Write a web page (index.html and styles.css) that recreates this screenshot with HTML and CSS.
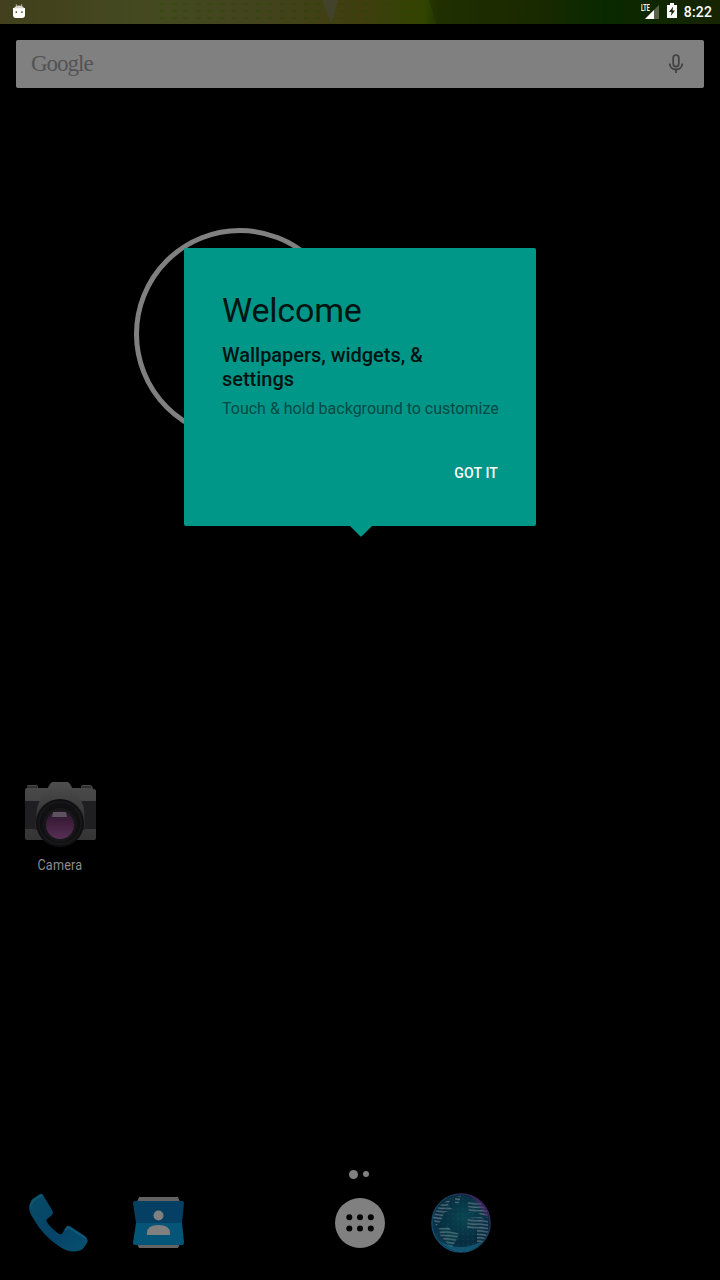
FILE: index.html
```html
<!DOCTYPE html>
<html lang="en">
<head>
<meta charset="utf-8">
<title>Home</title>
<link rel="stylesheet" href="styles.css">
</head>
<body>
<div class="screen">
  <header class="status">
    <svg class="status-pattern" viewBox="0 0 720 24">
      <defs><pattern id="dots" width="12" height="7" patternUnits="userSpaceOnUse"><ellipse cx="6" cy="4" rx="3" ry="1.5" fill="#254500" opacity=".3"/></pattern></defs>
      <path d="M155 0H435V24H155Z" fill="url(#dots)"/>
      <path d="M322 0H338L331 24Z" fill="#45453a" opacity=".6"/>
      <path d="M429 0H515L524 24H436Z" fill="#1e2800" opacity=".4"/>
    </svg>
    <svg class="android" viewBox="0 0 12 16"><path d="M3 1L4 4M9 1L8 4" stroke="#aaa895" stroke-width="1"/><path d="M0 5H12V12Q12 15 9 15H3Q0 15 0 12Z" fill="#fff"/><path d="M1 5.2Q2 2.5 6 2.5T11 5.2Z" fill="#d5d4cb"/><path d="M2.6 8.2H4V10H2.6ZM8.2 8.2H9.6V10H8.2Z" fill="#555438"/></svg>
    <div class="indicators">
      <div class="signal"><span class="lte">LTE</span><svg viewBox="0 0 18 16"><path d="M4 15L18 1V15Z" fill="#596447"/><path d="M4 15L13 6V15Z" fill="#fff"/></svg></div>
      <svg class="battery" viewBox="0 0 10 16"><path d="M3 0H7V2H10V15H0V2H3Z" fill="#fff"/><path d="M6.2 3.5L2 9H4.6L3.8 13L8 7.4H5.5Z" fill="#152400"/></svg>
      <span class="time">8:22</span>
    </div>
  </header>
  <div class="search">
    <span class="brand">Google</span>
    <svg class="mic" viewBox="0 0 16 20"><rect x="5.2" y="1" width="5.6" height="11.6" rx="2.8" fill="none" stroke="#404040" stroke-width="1.7"/><path d="M1.7 9.5C2 17.5 14 17.5 14.3 9.5M8 15.5V19" fill="none" stroke="#404040" stroke-width="1.8"/></svg>
  </div>
  <main class="workspace">
    <div class="clock"></div>
    <div class="app">
      <svg class="camera" viewBox="0 0 72 66">
        <defs>
          <linearGradient id="body" x2="0" y2="1"><stop stop-color="#4a4a4a"/><stop offset="1" stop-color="#343434"/></linearGradient>
          <linearGradient id="hump" x2="0" y2="1"><stop stop-color="#4e4e4e"/><stop offset=".5" stop-color="#3c3c3c"/><stop offset="1" stop-color="#252525"/></linearGradient>
          <linearGradient id="lens" x2="0" y2="1"><stop stop-color="#2a152d"/><stop offset=".5" stop-color="#42203f"/><stop offset="1" stop-color="#563055"/></linearGradient>
        </defs>
        <path d="M3 4Q3 3 5 3H12Q14 3 14 6H57Q57 3 59 3H66Q68 3 69 7Q72 7 72 9V56Q72 58 70 58H3Q1 58 1 56V9Q1 6 3 6Z" fill="url(#body)"/>
        <path d="M1 19H72V47H1Z" fill="#1f1f22"/>
        <path d="M3 4H13V6H3ZM58 4H67V6H58Z" fill="#303030"/>
        <path d="M26 2Q27 0 29 0H43Q45 0 46 2L50 9Q56 14 60 26L61 48H11L13 26Q17 14 22 9Z" fill="url(#hump)"/>
        <circle cx="36" cy="41" r="24" fill="#101012"/>
        <circle cx="36" cy="41" r="21" fill="none" stroke="#19191c" stroke-width="1.5"/>
        <circle cx="36" cy="43" r="17" fill="#171619"/>
        <circle cx="36" cy="43" r="14" fill="url(#lens)"/>
        <path d="M29 30H42L43 35H28Z" fill="#5d535e"/>
      </svg>
      <span class="label">Camera</span>
    </div>
  </main>
  <div class="pages"><i class="page current"></i><i class="page"></i></div>
  <nav class="dock">
    <svg class="phone" viewBox="0 0 60 60">
      <defs><linearGradient id="handset" x2="1" y2="1"><stop stop-color="#084c66"/><stop offset=".55" stop-color="#064368"/><stop offset="1" stop-color="#07506f"/></linearGradient></defs>
      <path d="M1 14L3 8Q4 6 6 5L12 1Q14 0 15 2L24 17Q26 20 24 22L18 27Q20 32 26 37Q31 42 34 41L38 34Q40 32 42 33L57 43Q61 46 59 50L57 53Q54 58 49 58Q42 60 32 54Q14 42 5 25Q1 19 1 14Z" fill="url(#handset)"/>
      <path d="M2 13L6 7L14 2M37 37L40 34L57 45" fill="none" stroke="#145a70" stroke-width="1.5"/>
    </svg>
    <svg class="contacts" viewBox="0 0 52 52">
      <path d="M6 0H45L47 5H4ZM4 47H47L45 51H6Z" fill="#626262"/>
      <path d="M2 4H49Q51 4 51 6L49 26H3L0 6Q0 4 2 4Z" fill="#053f63"/>
      <path d="M3 26H49L51 45Q51 48 49 48H2Q0 48 0 46Z" fill="#055579"/>
      <circle cx="25.5" cy="18.5" r="5" fill="#808080"/>
      <path d="M14 38V36Q14 28 25.5 28T37 36V38Z" fill="#808080"/>
    </svg>
    <span></span>
    <svg class="drawer" viewBox="0 0 50 50"><circle cx="25" cy="25" r="25" fill="#808080"/><g fill="#000"><circle cx="14.3" cy="19.3" r="3"/><circle cx="25" cy="19.3" r="3"/><circle cx="35.8" cy="19.3" r="3"/><circle cx="14.3" cy="30.5" r="3"/><circle cx="25" cy="30.5" r="3"/><circle cx="35.8" cy="30.5" r="3"/></g></svg>
    <svg class="globe" viewBox="0 0 60 62">
      <defs>
        <radialGradient id="sea" cx=".55" cy=".4" r=".6"><stop stop-color="#0b4551"/><stop offset=".75" stop-color="#062c3f"/><stop offset="1" stop-color="#0d3a56"/></radialGradient>
        <linearGradient id="rim" x1="0" y1="1" x2="1" y2="0"><stop stop-color="#125577"/><stop offset=".6" stop-color="#15415b"/><stop offset=".85" stop-color="#43205b"/></linearGradient>
        <pattern id="waves" width="16" height="3.4" patternUnits="userSpaceOnUse" patternTransform="rotate(4)"><path d="M0 1.7Q4 1 8 1.7T16 1.7" fill="none" stroke="#566b79" stroke-width="1.4"/></pattern>
        <pattern id="grid" width="5" height="5" patternUnits="userSpaceOnUse"><circle cx="2" cy="2" r=".8" fill="#1b5865" opacity=".4"/></pattern>
      </defs>
      <circle cx="30" cy="31" r="29.2" fill="url(#sea)" stroke="url(#rim)" stroke-width="1.2"/>
      <circle cx="30" cy="31" r="27" fill="url(#grid)"/>
      <g fill="url(#waves)">
        <path d="M8 14L20 6L17 13L21 17L13 21L10 29L5 34L2 25Z"/>
        <path d="M24 5L30 4L28 11L24 12Z"/>
        <path d="M8 36L17 34L20 38L28 42L25 49L20 57L15 50L9 43Z"/>
        <path d="M37 10L48 9L56 19L57 26L51 24L46 20L38 21Z"/>
        <path d="M37 26L50 25L57 29L57 40L51 51L46 52V38L36 36Z"/>
      </g>
      <path d="M9 36L17 34L20 39L28 42L23 51L20 57L13 46Z" fill="#16806b" opacity=".15"/>
      <path d="M38 3Q54 9 58 26L53 22Q47 10 38 3Z" fill="#5b2075" opacity=".45"/>
      <path d="M9 49Q28 61 52 49Q43 60 30 60Q17 59 9 49Z" fill="#17617d" opacity=".7"/>
    </svg>
  </nav>
  <section class="cling">
    <h1>Welcome</h1>
    <h2>Wallpapers, widgets, &amp; settings</h2>
    <p>Touch &amp; hold background to customize</p>
    <button>GOT IT</button>
    <svg class="pointer" viewBox="0 0 24 12"><path d="M0 0H24L13 11Q12 12 11 11Z" fill="#009688"/></svg>
  </section>
</div>
</body>
</html>
```
FILE: styles.css
```css
* { box-sizing: border-box; }
body { margin: 0; background: #000; font-family: Roboto, sans-serif; }
svg { display: block; }
.screen { position: relative; width: 720px; height: 1280px; display: flex; flex-direction: column; overflow: hidden; background: #000; }
.status { position: relative; height: 24px; flex: none; display: flex; justify-content: space-between; padding: 0 8px 0 13px; background: linear-gradient(90deg, #42401d 0, #444a20 22%, #42441d 35%, #403e10 50%, #324300 59%, #203500 61%, #192900 75%, #082900 84%, #172400 100%); }
.status-pattern { position: absolute; inset: 0; width: 720px; height: 24px; }
.android { position: relative; width: 12px; height: 16px; margin-top: 3px; }
.indicators { position: relative; display: flex; }
.signal { display: flex; margin-right: 8px; }
.signal svg { width: 18px; height: 16px; margin: 4px 0 0 -14px; }
.lte { width: 14px; font-size: 9px; font-weight: 700; line-height: 9px; color: #fff; margin-top: 4px; transform: scaleX(.6); transform-origin: left; }
.battery { width: 10px; height: 16px; margin: 3px 7px 0 0; }
.time { color: #fff; font-size: 14px; font-weight: 500; line-height: 24px; letter-spacing: .15px; }
.search { flex: none; height: 48px; margin: 16px 16px 0; padding: 0 20px 0 15px; border-radius: 2px; background: #808080; display: flex; align-items: center; justify-content: space-between; }
.brand { font: 23px/46px "Liberation Serif", serif; letter-spacing: -1px; color: #535353; }
.mic { width: 16px; height: 20px; }
.workspace { flex: 1; display: flex; flex-direction: column; align-items: flex-start; }
.clock { flex: none; width: 212px; height: 212px; margin: 140px 0 0 134px; border: 5px solid #808080; border-radius: 50%; }
.app { width: 72px; margin: 342px 0 0 24px; display: flex; flex-direction: column; align-items: center; }
.camera { width: 72px; height: 66px; }
.label { margin-top: 9px; font-size: 14px; line-height: 17px; color: #8c8c8c; letter-spacing: .2px; transform: scaleX(.9); }
.pages { height: 10px; display: flex; justify-content: center; align-items: center; gap: 5px; margin: 0 0 13px -2px; }
.page { width: 6px; height: 6px; border-radius: 50%; background: #808080; }
.current { width: 9px; height: 9px; }
.dock { height: 62px; margin: 0 7px 26px; display: grid; grid-template-columns: repeat(7, 1fr); grid-template-rows: 62px; align-items: center; justify-items: center; }
.phone { width: 60px; height: 60px; margin-left: 1px; }
.contacts { width: 52px; height: 52px; margin-left: 1px; }
.drawer { width: 50px; height: 50px; }
.globe { width: 60px; height: 62px; margin-left: 1px; }
.cling { position: absolute; left: 184px; top: 248px; width: 352px; height: 277.5px; padding: 42px 38px 0; border-radius: 2px; background: #009688; display: flex; flex-direction: column; }
.cling h1 { margin: 0; font-size: 34px; font-weight: 400; line-height: 40px; letter-spacing: -.2px; color: #001412; }
.cling h2 { margin: 13px 0 0; font-size: 20px; font-weight: 500; line-height: 24px; letter-spacing: -.03px; color: #001412; }
.cling p { margin: 8px 0 0; font-size: 16px; line-height: 19px; color: #004b44; white-space: nowrap; }
.cling button { align-self: flex-end; margin: 47px 0 0; padding: 0; border: 0; background: none; color: #fff; font: 500 14px/17px Roboto, sans-serif; letter-spacing: .15px; }
.pointer { position: absolute; left: 164.5px; top: 277px; width: 24px; height: 12px; }
```
